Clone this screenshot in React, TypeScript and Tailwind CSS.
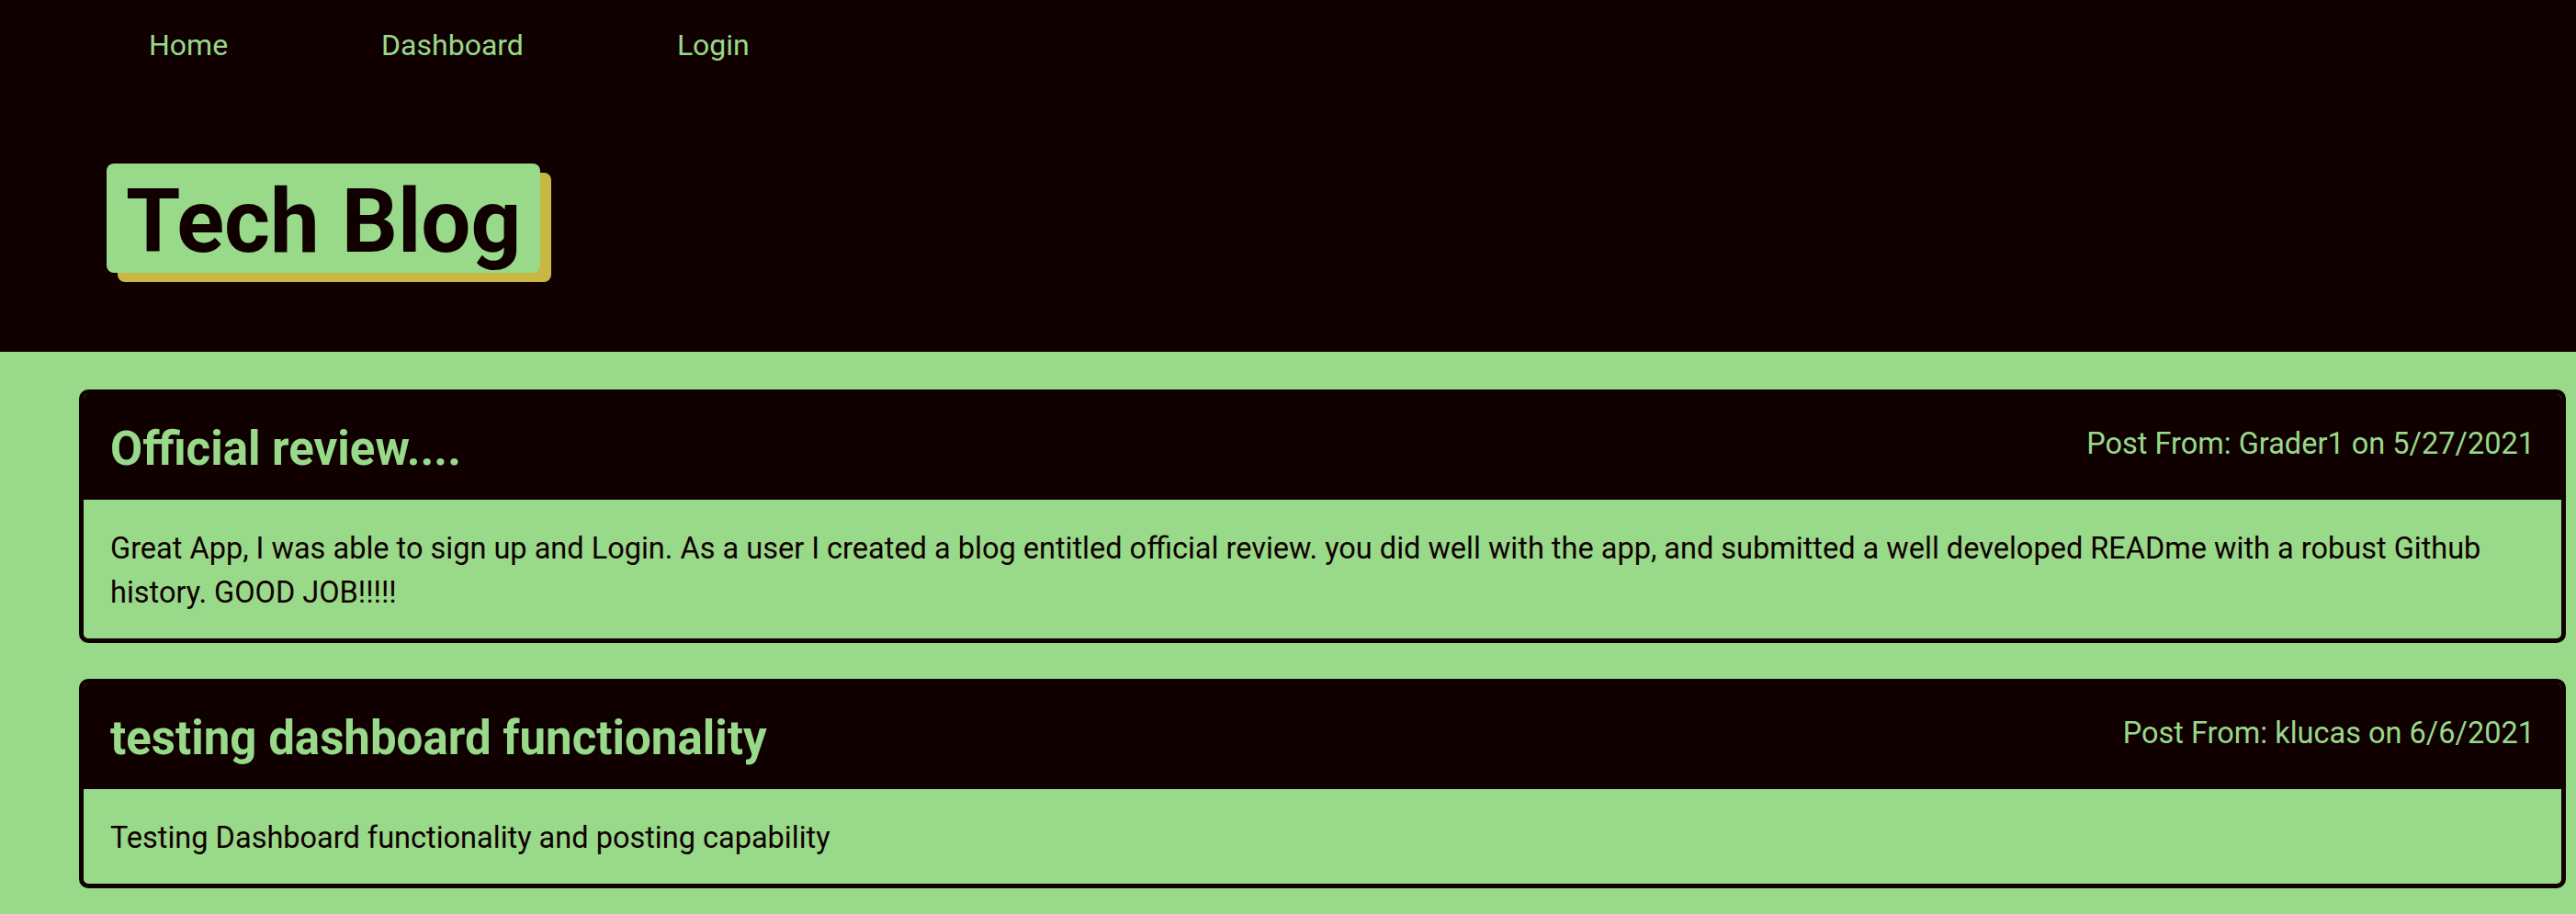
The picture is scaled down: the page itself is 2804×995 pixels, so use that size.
import React from "react";

type Post = { title: string; author: string; date: string; body: string };

const posts: Post[] = [
  {
    title: "Official review....",
    author: "Grader1",
    date: "5/27/2021",
    body:
      "Great App, I was able to sign up and Login. As a user I created a blog entitled official review. you did well with the app, and submitted a well developed READme with a robust Github history. GOOD JOB!!!!!",
  },
  {
    title: "testing dashboard functionality",
    author: "klucas",
    date: "6/6/2021",
    body: "Testing Dashboard functionality and posting capability",
  },
];

function PostCard({ post }: { post: Post }) {
  return (
    <article className="overflow-hidden rounded-[10px] border-[5px] border-[#110000] bg-[#98d98a]">
      <header className="flex items-start justify-between bg-[#110000] px-[29px] pb-[25px] pt-[30px]">
        <h2 className="text-[51px] font-bold leading-[60px] text-[#98d98a]">{post.title}</h2>
        <p className="text-[32.5px] leading-[48px] text-[#98d98a]">
          Post From: {post.author} on {post.date}
        </p>
      </header>
      <div className="px-[29px] pb-[26px] pt-[29px]">
        <p className="text-[32.5px] leading-[48px] text-[#110000]">{post.body}</p>
      </div>
    </article>
  );
}

export default function App() {
  return (
    <div className="min-h-screen bg-[#98d98a] font-['Roboto',sans-serif]">
      <header className="bg-[#110000] pb-[86px]">
        <nav className="flex gap-[167px] pl-[162px] pt-[25px]">
          <a href="#" className="text-[32px] leading-[48px] text-[#98d98a]">
            Home
          </a>
          <a href="#" className="text-[32px] leading-[48px] text-[#98d98a]">
            Dashboard
          </a>
          <a href="#" className="text-[32px] leading-[48px] text-[#98d98a]">
            Login
          </a>
        </nav>
        <div className="ml-[116px] mt-[105px] flex">
          <h1 className="rounded-[8px] bg-[#98d98a] px-[21px] pb-0 pt-[7px] text-[96px] font-bold leading-[112px] text-[#110000] shadow-[12px_10px_0_#c8b843]">
            Tech Blog
          </h1>
        </div>
      </header>
      <main className="ml-[86px] mr-[11px] flex flex-col gap-[39px] pt-[41px]">
        {posts.map((p) => (
          <PostCard key={p.title} post={p} />
        ))}
      </main>
    </div>
  );
}
